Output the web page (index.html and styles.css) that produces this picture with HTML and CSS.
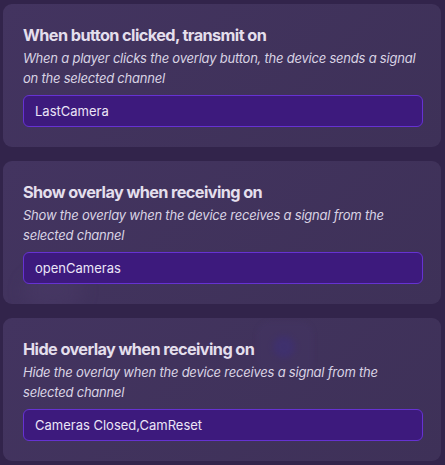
FILE: index.html
```html
<!DOCTYPE html>
<html>
<head>
<meta charset="utf-8">
<link rel="stylesheet" href="styles.css">
</head>
<body>
<div class="list">
  <section class="card">
    <h2 class="title">When button clicked, transmit on</h2>
    <p class="desc">When a player clicks the overlay button, the device sends a signal on the selected channel</p>
    <div class="field">LastCamera</div>
  </section>
  <section class="card">
    <div class="blob"></div>
    <h2 class="title">Show overlay when receiving on</h2>
    <p class="desc">Show the overlay when the device receives a signal from the selected channel</p>
    <div class="field">openCameras</div>
  </section>
  <section class="card">
    <div class="ghost"><div class="ghost-dot"></div></div>
    <h2 class="title">Hide overlay when receiving on</h2>
    <p class="desc">Hide the overlay when the device receives a signal from the selected channel</p>
    <div class="field">Cameras Closed,CamReset</div>
  </section>
</div>
</body>
</html>
```
FILE: styles.css
```css
html, body {
  margin: 0;
  padding: 0;
  background: #32244b;
  font-family: Inter, "Noto Sans", sans-serif;
}
.list {
  display: flex;
  flex-direction: column;
  gap: 14px;
  padding: 4px 4px 0 3px;
}
.card {
  position: relative;
  background: linear-gradient(135deg, #433460 0%, #3e3158 100%);
  border-radius: 9px;
  padding: 21px 18px 20px 20px;
  height: 143px;
  box-sizing: border-box;
  overflow: hidden;
}
.title {
  position: relative;
  margin: 0;
  font-size: 16.3px;
  line-height: 20px;
  font-weight: 700;
  color: #e4dfec;
  letter-spacing: -0.6px;
}
.desc {
  position: relative;
  margin: 3px 0 7px 0;
  font-size: 13px;
  line-height: 20px;
  font-style: italic;
  color: #d9d3e4;
  letter-spacing: -0.22px;
}
.field {
  position: relative;
  height: 32px;
  box-sizing: border-box;
  border: 1px solid #6632d2;
  background: #3d1a7d;
  border-radius: 6px;
  padding: 0 11px;
  display: flex;
  align-items: center;
  font-size: 13px;
  color: #ebe5f7;
}
.ghost {
  position: absolute;
  left: 254px;
  top: 4px;
  width: 56px;
  height: 52px;
  border-radius: 12px;
  background: rgba(70, 55, 110, 0.18);
  filter: blur(2px);
}
.ghost-dot {
  position: absolute;
  left: 16px;
  top: 14px;
  width: 22px;
  height: 22px;
  border-radius: 50%;
  background: rgba(60, 45, 130, 0.4);
  filter: blur(2px);
}
.blob {
  position: absolute;
  left: 20px;
  top: 110px;
  width: 60px;
  height: 40px;
  border-radius: 50%;
  background: rgba(80, 62, 110, 0.3);
  filter: blur(8px);
}
```
